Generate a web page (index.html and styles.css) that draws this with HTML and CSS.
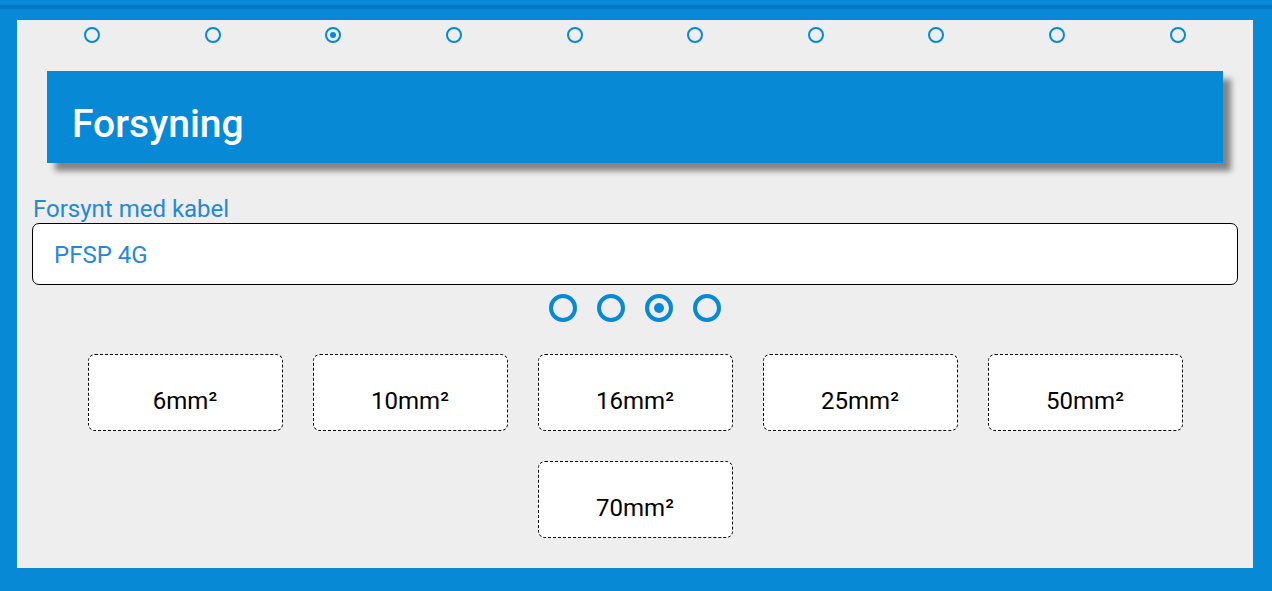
FILE: index.html
```html
<!DOCTYPE html>
<html lang="en">
<head>
    <meta charset="UTF-8">
    <meta name="viewport" content="width=device-width, initial-scale=1.0">
    <title>Forsyning</title>
    <link rel="stylesheet" href="styles.css">
</head>
<body>
    <div class="topbar"></div>

    <main class="panel">
        <div class="steps">
            <div class="step"><span class="dot"></span></div>
            <div class="step"><span class="dot"></span></div>
            <div class="step"><span class="dot checked"></span></div>
            <div class="step"><span class="dot"></span></div>
            <div class="step"><span class="dot"></span></div>
            <div class="step"><span class="dot"></span></div>
            <div class="step"><span class="dot"></span></div>
            <div class="step"><span class="dot"></span></div>
            <div class="step"><span class="dot"></span></div>
            <div class="step"><span class="dot"></span></div>
        </div>

        <header class="title">
            <h1>Forsyning</h1>
        </header>

        <label class="field-label" for="cable">Forsynt med kabel</label>
        <div class="field" id="cable">PFSP 4G</div>

        <div class="pager">
            <span class="ring"></span>
            <span class="ring"></span>
            <span class="ring checked"></span>
            <span class="ring"></span>
        </div>

        <div class="choices">
            <button class="choice">6mm²</button>
            <button class="choice">10mm²</button>
            <button class="choice">16mm²</button>
            <button class="choice">25mm²</button>
            <button class="choice">50mm²</button>
            <button class="choice">70mm²</button>
        </div>
    </main>
</body>
</html>
```

FILE: styles.css
```css
/* Page */
body {
    margin: 0;
    background-color: #0789d6;
    font-family: Roboto, "Liberation Sans", sans-serif;
}

.topbar {
    height: 5px;
    border-bottom: 4px solid #0479c2;
}

/* Grey panel */
.panel {
    margin: 11px 19px 0 17px;
    height: 548px;
    box-sizing: border-box;
    padding: 7px 15px 0;
    background-color: #eeeeee;
}

/* Step indicators */
.steps {
    display: flex;
}

.step {
    flex: 1;
    display: flex;
    justify-content: center;
}

.dot {
    width: 16px;
    height: 16px;
    box-sizing: border-box;
    border: 2px solid #0789d6;
    border-radius: 50%;
    display: flex;
    align-items: center;
    justify-content: center;
}

.dot.checked::after {
    content: "";
    width: 6px;
    height: 6px;
    border-radius: 50%;
    background-color: #0789d6;
}

/* Title card */
.title {
    margin: 28px 15px 0;
    height: 92px;
    box-sizing: border-box;
    padding: 14px 0 0 25px;
    display: flex;
    align-items: center;
    background-color: #0789d6;
    box-shadow: 8px 8px 6px rgba(0, 0, 0, 0.45);
}

h1 {
    margin: 0;
    font-size: 39px;
    font-weight: 500;
    color: #fff;
}

/* Cable field */
.field-label {
    display: block;
    margin-top: 32px;
    padding-left: 1px;
    font-size: 24px;
    color: #2389d6;
}

.field {
    height: 62px;
    box-sizing: border-box;
    padding: 2px 0 0 21px;
    display: flex;
    align-items: center;
    border: 1px solid #000;
    border-radius: 7px;
    background-color: #fff;
    font-size: 24px;
    color: #2389d6;
}

/* Page indicator */
.pager {
    margin-top: 9px;
    display: flex;
    justify-content: center;
    gap: 20px;
}

.ring {
    width: 28px;
    height: 28px;
    box-sizing: border-box;
    border: 4px solid #0789d6;
    border-radius: 50%;
    display: flex;
    align-items: center;
    justify-content: center;
}

.ring.checked::after {
    content: "";
    width: 10px;
    height: 10px;
    border-radius: 50%;
    background-color: #0789d6;
}

/* Size choices */
.choices {
    margin-top: 17px;
    display: flex;
    flex-wrap: wrap;
    justify-content: center;
}

.choice {
    margin: 15px;
    width: 195px;
    height: 77px;
    padding: 16px 0 0;
    display: flex;
    align-items: center;
    justify-content: center;
    border: 1px dashed #000;
    border-radius: 7px;
    background-color: #fff;
    font-family: Roboto, "Liberation Sans", sans-serif;
    font-size: 24px;
    color: #000;
    cursor: pointer;
}
```
